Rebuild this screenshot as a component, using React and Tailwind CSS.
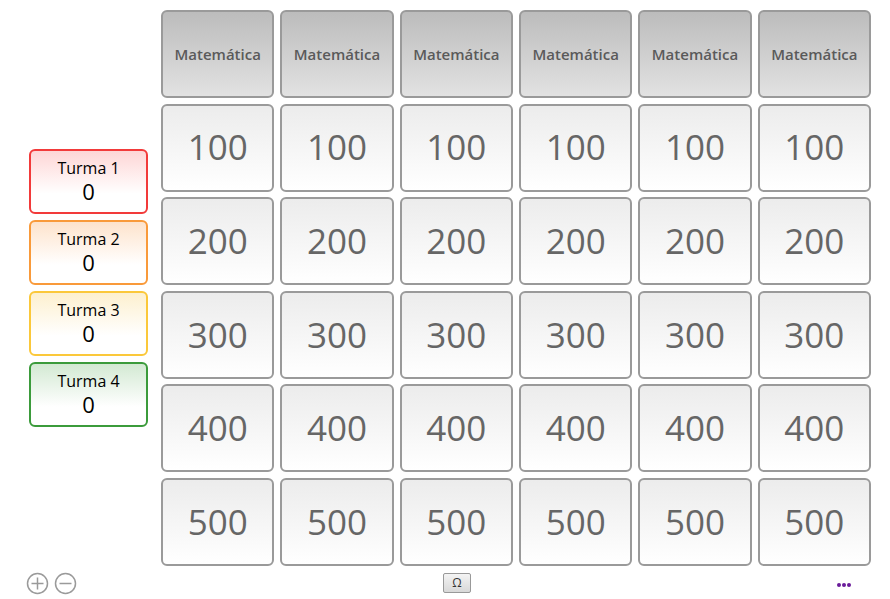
import React from "react";

const categories = Array(6).fill("Matemática");
const values = [100, 200, 300, 400, 500];

const teams = [
  { name: "Turma 1", border: "border-[#f23a3a]", bg: "from-[#fdd6d6]" },
  { name: "Turma 2", border: "border-[#f99a3a]", bg: "from-[#fde3cc]" },
  { name: "Turma 3", border: "border-[#fbc83a]", bg: "from-[#fdf0cf]" },
  { name: "Turma 4", border: "border-[#3b9b3b]", bg: "from-[#d3e9d3]" },
];

const App = () => {
  return (
    <div
      className="w-[890px] h-[599px] bg-white relative overflow-hidden"
      style={{ fontFamily: '"Open Sans", "DejaVu Sans", sans-serif' }}
    >
      <div className="flex items-center pt-[10px] pl-[29px]">
        {/* Teams */}
        <div className="flex flex-col gap-[6px] w-[119px]">
          {teams.map((t) => (
            <div
              key={t.name}
              className={`h-[65px] border-2 ${t.border} rounded-[6px] bg-gradient-to-b ${t.bg} to-white to-70% flex flex-col items-center justify-center text-black`}
            >
              <span className="text-[16px] leading-[19px]">{t.name}</span>
              <span className="text-[22px] leading-[26px]">0</span>
            </div>
          ))}
        </div>

        {/* Board */}
        <div className="ml-[13px] w-[710px] grid grid-cols-6 auto-rows-[88px] gap-x-[6px] gap-y-[5.6px]">
          {categories.map((c, i) => (
            <div
              key={"c" + i}
              className="border-2 border-[#9a9a9a] rounded-[6px] bg-gradient-to-b from-[#bcbcbc] to-[#e2e2e2] flex items-center justify-center text-[15px] font-semibold text-[#5a5a5a]"
            >
              {c}
            </div>
          ))}
          {values.map((v) =>
            categories.map((_, i) => (
              <div
                key={v + "-" + i}
                className="border-2 border-[#9a9a9a] rounded-[6px] bg-gradient-to-b from-[#ececec] to-white flex items-center justify-center text-[35px] text-[#666]"
              >
                {v}
              </div>
            ))
          )}
        </div>
      </div>

      {/* Bottom bar */}
      <div className="flex items-center h-[33px] mt-[1px]">
        <div className="flex items-center gap-[5px] pl-[26px]">
          <svg width="23" height="23" viewBox="0 0 23 23" fill="none" stroke="#9a9a9a" strokeWidth="1.5">
            <circle cx="11.5" cy="11.5" r="10" />
            <path d="M11.5 5.5v12M5.5 11.5h12" />
          </svg>
          <svg width="23" height="23" viewBox="0 0 23 23" fill="none" stroke="#9a9a9a" strokeWidth="1.5">
            <circle cx="11.5" cy="11.5" r="10" />
            <path d="M5.5 11.5h12" />
          </svg>
        </div>
        <div className="ml-[366px] w-[28px] h-[20px] border border-[#999] rounded-[2px] bg-gradient-to-b from-[#f4f4f4] to-[#d8d8d8] flex items-center justify-center text-[12px] text-[#333] leading-none">
          Ω
        </div>
        <div className="ml-[366px] flex gap-[1px] items-center mt-[4px]">
          <span className="w-[4px] h-[4px] bg-[#6a1b9a] rounded-full" />
          <span className="w-[4px] h-[4px] bg-[#6a1b9a] rounded-full" />
          <span className="w-[4px] h-[4px] bg-[#6a1b9a] rounded-full" />
        </div>
      </div>
    </div>
  );
};

export default App;
